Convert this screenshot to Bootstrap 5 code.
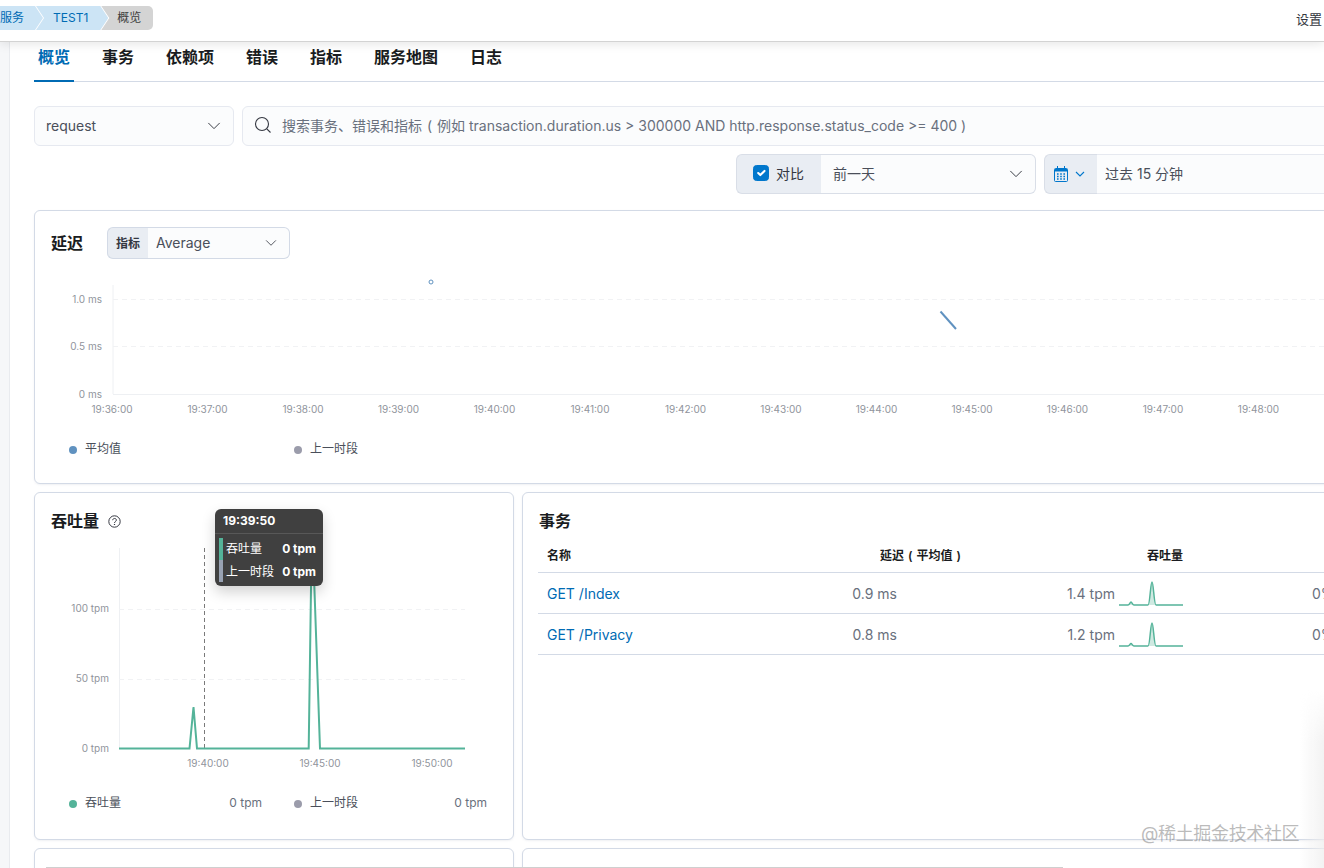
<!DOCTYPE html>
<html lang="zh-CN">
<head>
  <meta charset="UTF-8">
  <title>概览 - TEST1</title>
  <link href="https://cdn.jsdelivr.net/npm/bootstrap@5.3.2/dist/css/bootstrap.min.css" rel="stylesheet">
  <style>
    html, body { height: 868px; overflow: hidden; }
    body {
      background: #fff;
      color: #343741;
      font-family: Inter, "Noto Sans CJK SC", sans-serif;
      font-size: 14px;
    }
    .top-bar {
      height: 42px;
      padding-top: 6px;
      border-bottom: 1px solid #d3d3d3;
      box-shadow: 0 2px 10px rgba(0, 0, 0, .1);
      background: #fff;
      z-index: 5;
    }
    .crumb {
      height: 24px;
      line-height: 24px;
      font-size: 12px;
      color: #006bb4;
      background: #cce4f5;
      margin-right: -7px;
      padding: 0 20px 0 17px;
      clip-path: polygon(0 0, calc(100% - 8px) 0, 100% 50%, calc(100% - 8px) 100%, 0 100%, 8px 50%);
    }
    .crumb-first { padding: 0 19px 0 0; clip-path: polygon(0 0, calc(100% - 8px) 0, 100% 50%, calc(100% - 8px) 100%, 0 100%); }
    .crumb-last {
      color: #404040;
      background: #d4d4d4;
      padding: 0 12px 0 16px;
      border-radius: 0 5px 5px 0;
      clip-path: polygon(0 0, 100% 0, 100% 100%, 0 100%, 8px 50%);
    }
    .top-link { font-size: 13px; color: #343741; margin-top: 4px; padding-right: 2px; }
    .side-strip { width: 10px; height: 826px; background: #f6f7f9; border-right: 1px solid #e9ebef; flex: none; }
    .page-body { width: 1308px; margin-left: 24px; flex: none; }
    .apm-tabs { height: 40px; border-bottom: 1px solid #d3dae6; gap: 24px; }
    .apm-tabs .nav-link {
      height: 40px;
      padding: 0 4px;
      line-height: 31px;
      font-size: 16px;
      font-weight: 600;
      color: #1a1c21;
    }
    .apm-tabs .nav-link.active { color: #006bb4; border-bottom: 2px solid #006bb4; }
    .filter-row { height: 40px; }
    .filter-box, .filter-row .form-select {
      height: 40px;
      font-size: 14px;
      color: #4a4f5a;
      background-color: #fbfcfd;
      border: 1px solid #e6e9f0;
      border-radius: 6px;
    }
    .filter-row .form-select, .metric-group .form-select {
      background-image: url("data:image/svg+xml,%3csvg xmlns='http://www.w3.org/2000/svg' viewBox='0 0 16 16'%3e%3cpath fill='none' stroke='%23343741' stroke-width='1.1' d='M1.500 4.500l6.500 6.500 6.500-6.500'/%3e%3c/svg%3e");
    }
    .filter-row .form-select { padding-top: 0; padding-bottom: 2px; background-size: 14px 14px; }
    .filter-box { padding-bottom: 2px; }
    .kind-select { width: 200px; padding-left: 11px; }
    .search-box { flex: 1; color: #69707d; padding-left: 11px; gap: 10px; }
    .paren { margin: 0 1px; }
    .compare-group { width: 300px; }
    .date-group { width: 298px; }
    .filter-row .input-group-text {
      background: #e9edf3;
      border: 1px solid #d9dee7;
      border-right: 0;
      color: #343741;
      font-size: 14px;
      border-radius: 6px 0 0 6px;
    }
    .compare-group .input-group-text { width: 86px; padding: 0 0 2px 16px; gap: 7px; }
    .compare-group .form-check-input { margin: 0; width: 16px; height: 16px; background-color: #0077cc; border-color: #0077cc; }
    .compare-group .form-select { padding-left: 12px; border-color: #d9dee7; border-left: 0; }
    .date-group .input-group-text { width: 54px; padding: 0 0 0 9px; gap: 7px; }
    .date-value { flex: 1; padding-left: 8px; border-left: 0; border-radius: 0 6px 6px 0 !important; }
    .panel {
      border: 1px solid #d3dae6;
      border-radius: 6px;
      padding: 16px;
      background: #fff;
      box-shadow: 0 1px 2px rgba(152, 162, 179, .15);
    }
    .panel-title { font-size: 16px; font-weight: 600; color: #1a1c21; line-height: 24px; margin: 0; }
    .metric-group { width: 183px; height: 32px; }
    .metric-group .input-group-text {
      width: 42px;
      padding: 1px 0 0 8px;
      font-size: 12px;
      font-weight: 600;
      color: #343741;
      background: #e9edf3;
      border: 1px solid #d3dae6;
      border-right: 0;
    }
    .metric-group .form-select {
      height: 32px;
      min-height: 0;
      padding: 0 0 1px 8px;
      font-size: 14px;
      color: #4a4f5a;
      background-color: #fbfcfd;
      background-size: 12px 12px;
      border: 1px solid #d3dae6;
      border-left: 0;
    }
    .chart { display: block; margin: 0 -16px; }
    .chart text { font-family: Inter, sans-serif; font-size: 10px; fill: #90949c; }
    .grid-line { stroke: #f1f2f4; stroke-dasharray: 5 4; }
    .axis-line { stroke: #eef0f3; }
    .legend-row { padding-left: 18px; width: 436px; font-size: 12px; line-height: 18px; margin-bottom: 9px; }
    .legend-wide { width: 436px; margin-bottom: 11px; }
    .legend-item { width: 193px; color: #4a4f5a; gap: 8px; }
    .legend-item .tpm-val { margin-left: auto; color: #69707d; }
    .dot { width: 8px; height: 8px; border-radius: 50%; flex: none; margin-top: 1px; }
    .dot-avg { background: #6092c0; }
    .dot-prev { background: #9b9cab; }
    .dot-tpm { background: #54b399; }
    .latency-panel { height: 274px; }
    .pair-row { display: grid; grid-template-columns: 480px 820px; gap: 8px; }
    .pair-row > .panel { height: 348px; }
    .help-icon { margin-left: 9px; }
    .tip-box {
      position: absolute;
      left: 180px;
      top: 16px;
      width: 108px;
      height: 77px;
      background: #404040;
      color: #fff;
      border-radius: 6px;
      font-size: 12px;
      box-shadow: 0 6px 14px rgba(0, 0, 0, .18);
    }
    .tip-head { height: 25px; line-height: 24px; padding-left: 8px; font-weight: 700; border-bottom: 1px solid #585858; }
    .tip-rows { margin: 4px 7px 0 4px; border-left: 4px solid; border-image: linear-gradient(#54b399 50%, #98a2b3 50%) 1; padding-left: 3px; height: 44px; }
    .tip-line { height: 21px; line-height: 21px; }
    .tip-line b { font-weight: 700; }
    .tx-table { table-layout: fixed; width: 788px; margin: 5px 0 0 -1px; font-size: 14px; }
    .tx-table th { height: 34px; padding: 2px 8px 0; font-size: 12px; font-weight: 600; color: #1a1c21; vertical-align: middle; white-space: nowrap; border-bottom-color: #d3dae6; }
    .tx-table td { height: 41px; padding: 2px 8px 0; vertical-align: middle; color: #69707d; border-bottom-color: #d3dae6; white-space: nowrap; }
    .tx-table tr > :first-child { padding-left: 9px; }
    .tx-table a { color: #006bb4; text-decoration: none; }
    .spark { flex: none; margin-left: 4px; }
    .rate-cell { padding-left: 121px !important; }
    .mark-text {
      position: absolute;
      left: 1141px;
      top: 820px;
      font-size: 18px;
      letter-spacing: -.35px;
      color: rgba(120, 120, 120, .5);
      z-index: 6;
    }
    .shot-edge { position: absolute; left: 46px; top: 867px; width: 1017px; height: 1px; background: #cfcfcf; z-index: 6; }
    .edge-fade {
      position: absolute;
      right: 0;
      top: 690px;
      width: 24px;
      height: 178px;
      background: linear-gradient(to right, rgba(240, 240, 240, 0), rgba(238, 238, 238, .75));
      -webkit-mask-image: linear-gradient(transparent, #000 30%);
      mask-image: linear-gradient(transparent, #000 30%);
      z-index: 6;
    }
  </style>
</head>
<body>

<header class="top-bar d-flex justify-content-between position-relative">
  <nav class="d-flex">
    <div class="crumb crumb-first">服务</div>
    <div class="crumb">TEST1</div>
    <div class="crumb crumb-last">概览</div>
  </nav>
  <div class="top-link">设置</div>
</header>

<div class="d-flex">
  <div class="side-strip"></div>
  <main class="page-body">
    <ul class="nav apm-tabs">
      <li class="nav-item"><a class="nav-link active" href="#">概览</a></li>
      <li class="nav-item"><a class="nav-link" href="#">事务</a></li>
      <li class="nav-item"><a class="nav-link" href="#">依赖项</a></li>
      <li class="nav-item"><a class="nav-link" href="#">错误</a></li>
      <li class="nav-item"><a class="nav-link" href="#">指标</a></li>
      <li class="nav-item"><a class="nav-link" href="#">服务地图</a></li>
      <li class="nav-item"><a class="nav-link" href="#">日志</a></li>
    </ul>

    <div class="filter-row d-flex gap-2 mt-4">
      <select class="form-select kind-select"><option>request</option></select>
      <div class="filter-box search-box d-flex align-items-center">
        <svg width="18" height="18" viewBox="0 0 18 18" fill="none" stroke="#343741" stroke-width="1.1"><circle cx="8" cy="8" r="6.5"/><path d="M12.8 12.8l3.7 3.7"/></svg>
        <span>搜索事务、错误和指标 <span class="paren">(</span> 例如 transaction.duration.us &gt; 300000 AND http.response.status_code &gt;= 400 )</span>
      </div>
    </div>

    <div class="filter-row d-flex justify-content-end gap-2 mt-2">
      <div class="input-group compare-group flex-nowrap">
        <label class="input-group-text"><input class="form-check-input" type="checkbox" checked>对比</label>
        <select class="form-select"><option>前一天</option></select>
      </div>
      <div class="input-group date-group flex-nowrap">
        <span class="input-group-text">
          <svg width="14" height="16" viewBox="0 0 14 16" fill="none" stroke="#0077cc"><rect x=".5" y="2.5" width="13" height="13" rx="1"/><path d="M3.5 0v3M10.5 0v3"/><path d="M1 3h12v2.5H1z" fill="#0077cc" stroke="none"/><path d="M3 8h1.6M6.2 8h1.6M9.4 8h1.6M3 10.5h1.6M6.2 10.5h1.6M9.4 10.5h1.6M3 13h1.6M6.2 13h1.6M9.4 13h1.6" stroke-width="1.3"/></svg>
          <svg width="10" height="6" viewBox="0 0 10 6" fill="none" stroke="#0077cc" stroke-width="1.1"><path d="M1 1l4 4 4-4"/></svg>
        </span>
        <div class="filter-box date-value d-flex align-items-center">过去 15 分钟</div>
      </div>
    </div>

    <section class="panel latency-panel mt-3">
      <div class="d-flex align-items-center">
        <h2 class="panel-title">延迟</h2>
        <div class="input-group metric-group flex-nowrap ms-4">
          <span class="input-group-text">指标</span>
          <select class="form-select"><option>Average</option></select>
        </div>
      </div>
      <svg class="chart" width="1306" height="181" viewBox="35 259 1306 181">
        <line class="axis-line" x1="113" y1="285" x2="113" y2="394"/>
        <line class="axis-line" x1="113" y1="394.5" x2="1341" y2="394.5"/>
        <line class="grid-line" x1="113" y1="299.5" x2="1341" y2="299.5"/>
        <line class="grid-line" x1="113" y1="346.5" x2="1341" y2="346.5"/>
        <g text-anchor="end">
          <text x="102" y="303">1.0 ms</text>
          <text x="102" y="350">0.5 ms</text>
          <text x="102" y="398">0 ms</text>
        </g>
        <g text-anchor="middle">
          <text x="112" y="413">19:36:00</text>
          <text x="207.5" y="413">19:37:00</text>
          <text x="303" y="413">19:38:00</text>
          <text x="398.5" y="413">19:39:00</text>
          <text x="494.5" y="413">19:40:00</text>
          <text x="590" y="413">19:41:00</text>
          <text x="685.5" y="413">19:42:00</text>
          <text x="781" y="413">19:43:00</text>
          <text x="876.5" y="413">19:44:00</text>
          <text x="972" y="413">19:45:00</text>
          <text x="1067.5" y="413">19:46:00</text>
          <text x="1163" y="413">19:47:00</text>
          <text x="1258.5" y="413">19:48:00</text>
        </g>
        <circle cx="431" cy="282" r="2" fill="#fff" stroke="#6092c0"/>
        <line x1="940.5" y1="311.5" x2="956" y2="329" stroke="#6092c0" stroke-width="2"/>
      </svg>
      <div class="legend-row d-flex justify-content-between">
        <div class="legend-item d-flex align-items-center"><span class="dot dot-avg"></span>平均值</div>
        <div class="legend-item d-flex align-items-center"><span class="dot dot-prev"></span>上一时段</div>
      </div>
    </section>

    <div class="pair-row mt-2">
      <section class="panel position-relative">
        <div class="d-flex align-items-center">
          <h2 class="panel-title">吞吐量</h2>
          <svg class="help-icon" width="13" height="13" viewBox="0 0 13 13" fill="none" stroke="#343741"><circle cx="6.5" cy="6.5" r="5.7"/><path d="M4.7 5.2c0-2.3 3.7-2.3 3.7-.1 0 1.3-1.9 1.4-1.9 2.9"/><path d="M6.5 9v1" stroke-width="1.2"/></svg>
        </div>
        <svg class="chart" width="478" height="261" viewBox="35 533 478 261">
          <line class="axis-line" x1="119.5" y1="548" x2="119.5" y2="748"/>
          <line class="grid-line" x1="119" y1="609.5" x2="465" y2="609.5"/>
          <line class="grid-line" x1="119" y1="679.5" x2="465" y2="679.5"/>
          <g text-anchor="end">
            <text x="109" y="612">100 tpm</text>
            <text x="109" y="682">50 tpm</text>
            <text x="109" y="752">0 tpm</text>
          </g>
          <g text-anchor="middle">
            <text x="208" y="767">19:40:00</text>
            <text x="320" y="767">19:45:00</text>
            <text x="432" y="767">19:50:00</text>
          </g>
          <line x1="204.5" y1="548" x2="204.5" y2="748" stroke="#7a7a7a" stroke-dasharray="4 3"/>
          <polyline fill="none" stroke="#54b399" stroke-width="2" points="119,748.5 189.5,748.5 193.5,707 197,748.5 308.7,748.5 312,519 320,748.5 465,748.5"/>
        </svg>
        <div class="legend-row legend-wide d-flex justify-content-between">
          <div class="legend-item d-flex align-items-center"><span class="dot dot-tpm"></span>吞吐量<span class="tpm-val">0 tpm</span></div>
          <div class="legend-item d-flex align-items-center"><span class="dot dot-prev"></span>上一时段<span class="tpm-val">0 tpm</span></div>
        </div>
        <div class="tip-box">
          <div class="tip-head">19:39:50</div>
          <div class="tip-rows d-flex flex-column justify-content-between">
            <div class="tip-line d-flex justify-content-between">吞吐量<b>0 tpm</b></div>
            <div class="tip-line d-flex justify-content-between">上一时段<b>0 tpm</b></div>
          </div>
        </div>
      </section>

      <section class="panel">
        <h2 class="panel-title">事务</h2>
        <table class="table tx-table">
          <colgroup>
            <col style="width:267px"><col style="width:100px"><col style="width:65px"><col style="width:221px"><col>
          </colgroup>
          <thead>
            <tr><th>名称</th><th colspan="2" class="text-end">延迟 <span class="paren">(</span> 平均值 <span class="paren">)</span></th><th class="text-end">吞吐量</th><th></th></tr>
          </thead>
          <tbody>
            <tr>
              <td><a href="#">GET /Index</a></td>
              <td class="text-end">0.9 ms</td>
              <td colspan="2"><div class="d-flex justify-content-end align-items-center">1.4 tpm
                <svg class="spark" width="64" height="26" viewBox="0 0 64 26"><path d="M0 24h9c1.5 0 2-3 3-3s1.5 3 3 3h14c2 0 2.5-23 4-23s2 23 4 23h27" fill="#cfe9e1" stroke="#54b399" stroke-width="1.5"/></svg></div></td>
              <td class="rate-cell">0%</td>
            </tr>
            <tr>
              <td><a href="#">GET /Privacy</a></td>
              <td class="text-end">0.8 ms</td>
              <td colspan="2"><div class="d-flex justify-content-end align-items-center">1.2 tpm
                <svg class="spark" width="64" height="26" viewBox="0 0 64 26"><path d="M0 24h9c1.5 0 2-2.500 3-2.500s1.500 2.500 3 2.500h14c2 0 2.500-23 4-23s2 23 4 23h27" fill="#cfe9e1" stroke="#54b399" stroke-width="1.5"/></svg></div></td>
              <td class="rate-cell">0%</td>
            </tr>
          </tbody>
        </table>
      </section>
    </div>

    <div class="pair-row mt-2">
      <section class="panel"></section>
      <section class="panel"></section>
    </div>
  </main>
</div>

<div class="edge-fade"></div>
<div class="shot-edge"></div>
<div class="mark-text">@稀土掘金技术社区</div>

</body>
</html>
